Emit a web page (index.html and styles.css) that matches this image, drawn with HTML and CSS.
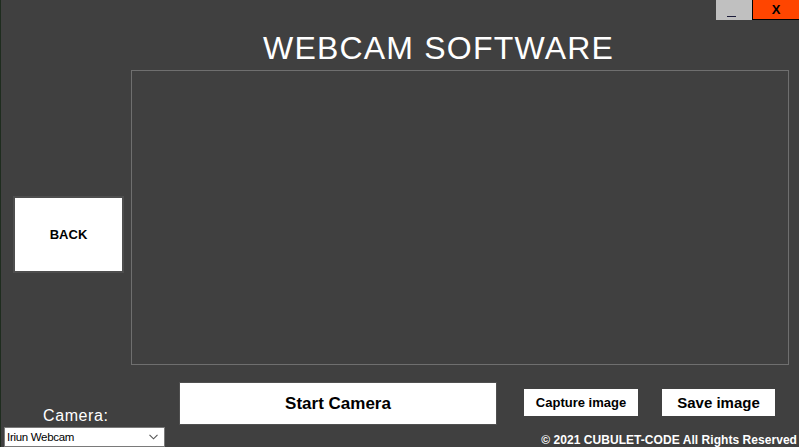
FILE: index.html
```html
<!DOCTYPE html>
<html>
<head>
<meta charset="utf-8">
<link rel="stylesheet" href="styles.css">
</head>
<body>
<div class="app">
  <div class="titlebar">
    <div class="win-btn min"><span class="min-line"></span></div>
    <div class="win-btn close">X</div>
  </div>
  <h1 class="title">WEBCAM SOFTWARE</h1>
  <div class="middle">
    <div class="side">
      <div class="btn back">BACK</div>
    </div>
    <div class="video"></div>
  </div>
  <div class="bottom">
    <div class="camera-col">
      <div class="camera-label">Camera:</div>
      <div class="select">
        <span class="select-text">Iriun Webcam</span>
        <svg class="chevron" width="9" height="6" viewBox="0 0 9 6"><path d="M0.5 0.8 L4.5 4.8 L8.5 0.8" fill="none" stroke="#555" stroke-width="1.1"/></svg>
      </div>
    </div>
    <div class="btn start">Start Camera</div>
    <div class="right-col">
      <div class="actions">
        <div class="btn capture">Capture image</div>
        <div class="btn save">Save image</div>
      </div>
      <div class="copyright">© 2021 CUBULET-CODE All Rights Reserved</div>
    </div>
  </div>
</div>
</body>
</html>
```

FILE: styles.css
```css
html, body {
  margin: 0;
  padding: 0;
}
body {
  background: #404040;
  font-family: "Liberation Sans", Arial, sans-serif;
  width: 799px;
  height: 447px;
  overflow: hidden;
}
.app {
  width: 799px;
  height: 447px;
  display: flex;
  flex-direction: column;
  background: #404040;
  box-shadow: inset 1px 0 0 #1e2c1e;
  overflow: hidden;
}
.titlebar {
  height: 20px;
  display: flex;
  justify-content: flex-end;
  flex: none;
}
.win-btn {
  height: 20px;
  box-sizing: border-box;
}
.min {
  width: 36px;
  background: #c0c0c0;
  display: flex;
  justify-content: center;
  align-items: flex-end;
}
.min-line {
  width: 9px;
  height: 1px;
  background: #1c1c3a;
  margin-bottom: 3px;
  margin-right: 5px;
}
.close {
  width: 47px;
  background: #ff4500;
  border-left: 1px solid #000;
  border-bottom: 1px solid #000;
  color: #000;
  font-weight: bold;
  font-size: 13px;
  line-height: 19px;
  text-align: center;
}
.title {
  margin: 0;
  height: 50px;
  box-sizing: border-box;
  padding-top: 12px;
  padding-left: 263px;
  font-size: 32px;
  line-height: 32px;
  font-weight: normal;
  letter-spacing: 1.2px;
  color: #fff;
  flex: none;
}
.middle {
  display: flex;
  height: 295px;
  flex: none;
}
.side {
  width: 131px;
  flex: none;
}
.btn {
  background: #fff;
  color: #000;
  font-weight: bold;
  display: flex;
  align-items: center;
  justify-content: center;
  box-sizing: border-box;
}
.back {
  margin-left: 13px;
  margin-top: 126px;
  width: 111px;
  height: 77px;
  border: 2px solid #4e4e4e;
  font-size: 13px;
}
.video {
  width: 658px;
  height: 295px;
  box-sizing: border-box;
  border: 1px solid #6f6f6f;
}
.bottom {
  display: flex;
  height: 82px;
  flex: none;
}
.camera-col {
  margin-left: 4px;
  width: 161px;
  flex: none;
  display: flex;
  flex-direction: column;
}
.camera-label {
  padding-top: 42px;
  padding-left: 39px;
  font-size: 16px;
  line-height: 18px;
  letter-spacing: 0.6px;
  color: #fff;
}
.select {
  margin-top: 2px;
  height: 20px;
  box-sizing: border-box;
  background: #fff;
  border: 1px solid #7a7a7a;
  display: flex;
  align-items: center;
  justify-content: space-between;
  padding: 0 6px 0 2px;
}
.select-text {
  font-size: 11.5px;
  color: #000;
  letter-spacing: -0.3px;
}
.chevron {
  display: block;
}
.start {
  margin-left: 14px;
  margin-top: 17px;
  width: 318px;
  height: 43px;
  border: 1px solid #505050;
  font-size: 17px;
  flex: none;
}
.right-col {
  margin-left: 27px;
  flex: 1;
  display: flex;
  flex-direction: column;
}
.actions {
  display: flex;
  gap: 24px;
  margin-top: 24px;
}
.capture {
  width: 114px;
  height: 27px;
  font-size: 13px;
}
.save {
  width: 113px;
  height: 27px;
  font-size: 15px;
}
.copyright {
  margin-top: 17px;
  padding-right: 2px;
  text-align: right;
  color: #fff;
  font-weight: bold;
  font-size: 12px;
  line-height: 14px;
  letter-spacing: 0.05px;
  white-space: nowrap;
}
```
